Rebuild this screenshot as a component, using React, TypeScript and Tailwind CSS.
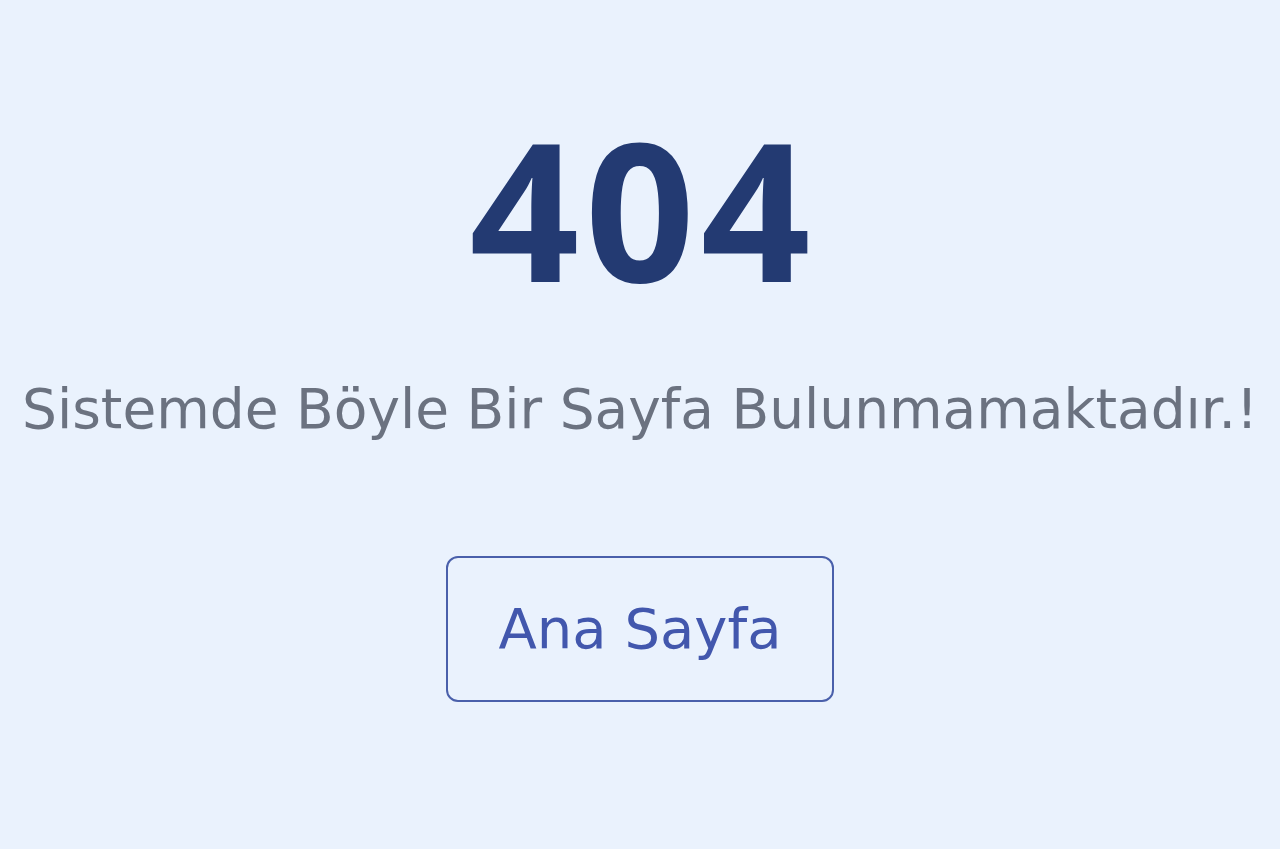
export default function App() {
  return (
    <div
      className="flex min-h-screen flex-col items-center bg-[#eaf2fd] pt-[112px]"
      style={{ fontFamily: '"DejaVu Sans", "Noto Sans", sans-serif' }}
    >
      <h1
        className="pl-[0.03em] text-[192px] font-bold leading-none tracking-[0.03em] text-[#233a72]"
        style={{ fontFamily: '"Noto Sans", "Open Sans", sans-serif' }}
      >
        404
      </h1>
      <p className="mt-[78px] text-[55px] leading-none text-[#6b7280]">
        Sistemde Böyle Bir Sayfa Bulunmamaktadır.!
      </p>
      <a
        href="#"
        className="mt-[119px] flex h-[146px] w-[388px] items-center justify-center rounded-[12px] border-2 border-[#4a60ab] text-[56px] text-[#4257ad]"
      >
        Ana Sayfa
      </a>
    </div>
  );
}
